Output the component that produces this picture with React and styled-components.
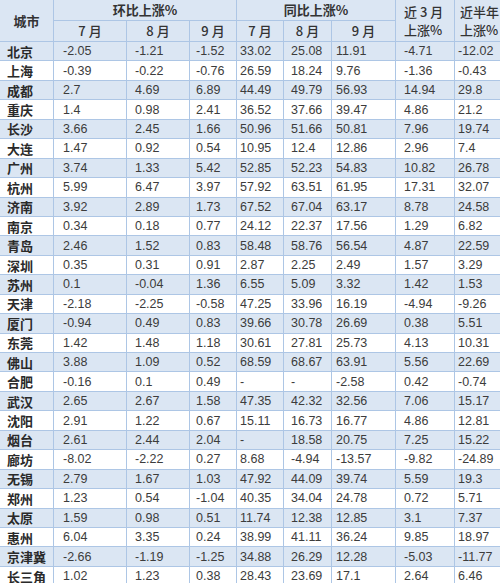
import React from "react";
import styled, { createGlobalStyle } from "styled-components";

const Global = createGlobalStyle`
  html, body { margin: 0; padding: 0; background: #ffffff; }
  body { font-family: "Liberation Sans", "Noto Sans CJK SC", sans-serif; }
`;

const BORDER = "#adc6e5";
const BLUE = "#dbe6f3";

const cols = [53, 72, 62, 46, 46, 47, 63, 58, 53];
const pads = [7, 9, 8, 6, 3, 7, 4, 8, 3];

const Table = styled.div`
  display: grid;
  width: 500px;
  grid-template-columns: ${cols.map((c) => c + "px").join(" ")};
  grid-template-rows: 20px 20px;
  grid-auto-rows: 18.44px;
  gap: 1px;
  background: ${BORDER};
  overflow: hidden;
  height: 583px;
`;

const Head = styled.div`
  grid-column: ${(p) => p.$col} / span ${(p) => p.$span || 1};
  grid-row: ${(p) => p.$row} / span ${(p) => p.$rows || 1};
  background: ${BLUE};
  display: flex;
  flex-direction: column;
  justify-content: center;
  align-items: ${(p) => (p.$left ? "flex-start" : "center")};
  padding-left: ${(p) => p.$pad || 0}px;
  font-family: "Noto Sans CJK SC", "Liberation Sans", sans-serif;
  font-size: 13px;
  font-weight: ${(p) => (p.$bold ? 700 : 500)};
  color: #333;
  line-height: 18px;
  white-space: nowrap;
`;

const Cell = styled.div`
  background: ${(p) => (p.$striped ? BLUE : "#ffffff")};
  display: flex;
  align-items: center;
  padding-left: ${(p) => p.$pad}px;
  font-size: 12.5px;
  color: #3c3c3c;
  white-space: nowrap;
  overflow: hidden;
`;

const City = styled(Cell)`
  font-family: "Noto Sans CJK SC", "Liberation Sans", sans-serif;
  font-weight: 700;
  font-size: 13px;
  color: #2a2a2a;
`;

const data = [
  ["北京", "-2.05", "-1.21", "-1.52", "33.02", "25.08", "11.91", "-4.71", "-12.02"],
  ["上海", "-0.39", "-0.22", "-0.76", "26.59", "18.24", "9.76", "-1.36", "-0.43"],
  ["成都", "2.7", "4.69", "6.89", "44.49", "49.79", "56.93", "14.94", "29.8"],
  ["重庆", "1.4", "0.98", "2.41", "36.52", "37.66", "39.47", "4.86", "21.2"],
  ["长沙", "3.66", "2.45", "1.66", "50.96", "51.66", "50.81", "7.96", "19.74"],
  ["大连", "1.47", "0.92", "0.54", "10.95", "12.4", "12.86", "2.96", "7.4"],
  ["广州", "3.74", "1.33", "5.42", "52.85", "52.23", "54.83", "10.82", "26.78"],
  ["杭州", "5.99", "6.47", "3.97", "57.92", "63.51", "61.95", "17.31", "32.07"],
  ["济南", "3.92", "2.89", "1.73", "67.52", "67.04", "63.17", "8.78", "24.58"],
  ["南京", "0.34", "0.18", "0.77", "24.12", "22.37", "17.56", "1.29", "6.82"],
  ["青岛", "2.46", "1.52", "0.83", "58.48", "58.76", "56.54", "4.87", "22.59"],
  ["深圳", "0.35", "0.31", "0.91", "2.87", "2.25", "2.49", "1.57", "3.29"],
  ["苏州", "0.1", "-0.04", "1.36", "6.55", "5.09", "3.32", "1.42", "1.53"],
  ["天津", "-2.18", "-2.25", "-0.58", "47.25", "33.96", "16.19", "-4.94", "-9.26"],
  ["厦门", "-0.94", "0.49", "0.83", "39.66", "30.78", "26.69", "0.38", "5.51"],
  ["东莞", "1.42", "1.48", "1.18", "30.61", "27.81", "25.73", "4.13", "10.31"],
  ["佛山", "3.88", "1.09", "0.52", "68.59", "68.67", "63.91", "5.56", "22.69"],
  ["合肥", "-0.16", "0.1", "0.49", "-", "-", "-2.58", "0.42", "-0.74"],
  ["武汉", "2.65", "2.67", "1.58", "47.35", "42.32", "32.56", "7.06", "15.17"],
  ["沈阳", "2.91", "1.22", "0.67", "15.11", "16.73", "16.77", "4.86", "12.81"],
  ["烟台", "2.61", "2.44", "2.04", "-", "18.58", "20.75", "7.25", "15.22"],
  ["廊坊", "-8.02", "-2.22", "0.27", "8.68", "-4.94", "-13.57", "-9.82", "-24.89"],
  ["无锡", "2.79", "1.67", "1.03", "47.92", "44.09", "39.74", "5.59", "19.3"],
  ["郑州", "1.23", "0.54", "-1.04", "40.35", "34.04", "24.78", "0.72", "5.71"],
  ["太原", "1.59", "0.98", "0.51", "11.74", "12.38", "12.85", "3.1", "7.37"],
  ["惠州", "6.04", "3.35", "0.24", "38.99", "41.11", "36.24", "9.85", "18.97"],
  ["京津冀", "-2.66", "-1.19", "-1.25", "34.88", "26.29", "12.28", "-5.03", "-11.77"],
  ["长三角", "1.02", "1.23", "0.38", "28.43", "23.69", "17.1", "2.64", "6.46"],
];

export default function App() {
  return (
    <>
      <Global />
      <Table>
        <Head $col={1} $row={1} $rows={2} $bold>城市</Head>
        <Head $col={2} $row={1} $span={3} $bold>环比上涨%</Head>
        <Head $col={5} $row={1} $span={3} $bold>同比上涨%</Head>
        <Head $col={8} $row={1} $rows={2} $left $pad={8}>
          <span>近 3 月</span>
          <span>上涨%</span>
        </Head>
        <Head $col={9} $row={1} $rows={2} $left $pad={5}>
          <span>近半年</span>
          <span>上涨%</span>
        </Head>
        {["7 月", "8 月", "9 月", "7 月", "8 月", "9 月"].map((m, i) => (
          <Head key={i} $col={i + 2} $row={2}>{m}</Head>
        ))}
        {data.map((row, r) =>
          row.map((v, c) =>
            c === 0 ? (
              <City key={r + "-" + c} $striped={r % 2 === 0} $pad={pads[c]}>{v}</City>
            ) : (
              <Cell key={r + "-" + c} $striped={r % 2 === 0} $pad={pads[c]}>{v}</Cell>
            )
          )
        )}
      </Table>
    </>
  );
}
